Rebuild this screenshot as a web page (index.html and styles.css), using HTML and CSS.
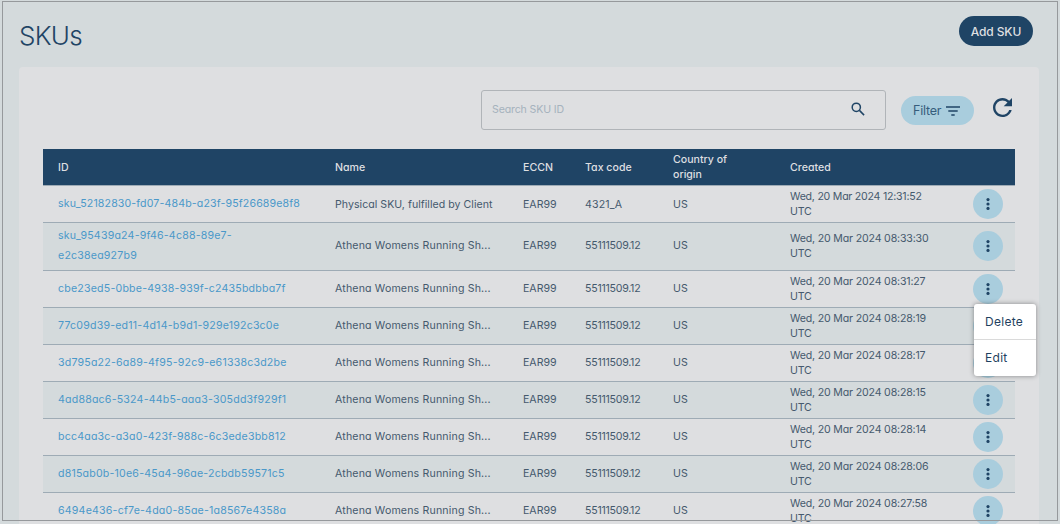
FILE: index.html
```html
<!DOCTYPE html>
<html lang="en">
<head>
<meta charset="utf-8">
<title>SKUs</title>
<link rel="stylesheet" href="styles.css">
</head>
<body>
<svg class="defs" width="0" height="0"><symbol id="dots" viewBox="0 0 4 14"><circle cx="2" cy="2.6" r="1.6"/><circle cx="2" cy="7" r="1.6"/><circle cx="2" cy="11.4" r="1.6"/></symbol></svg>
<main class="page">
  <header class="top">
    <h1 class="title">SKUs</h1>
    <button class="add">Add SKU</button>
  </header>
  <section class="card">
    <div class="toolbar">
      <div class="search">
        <span class="placeholder">Search SKU ID</span>
        <svg class="glass" viewBox="0 0 14 14"><circle cx="5.3" cy="5.3" r="4.1"/><path d="M8.4 8.4l4.7 4.7"/></svg>
      </div>
      <button class="filter"><span>Filter</span><svg class="lines" viewBox="0 0 14 10"><path d="M0 1h14M2.3 5h9.4M5.3 9h3.4"/></svg></button>
      <svg class="refresh" viewBox="4 4 16 16"><path d="M17.65 6.35C16.2 4.9 14.21 4 12 4c-4.42 0-7.99 3.58-7.99 8s3.57 8 7.99 8c3.73 0 6.84-2.55 7.73-6h-2.08c-.82 2.33-3.04 4-5.65 4-3.31 0-6-2.69-6-6s2.69-6 6-6c1.66 0 3.14.69 4.22 1.78L13 11h7V4l-2.35 2.35z"/></svg>
    </div>
    <div class="table">
      <div class="row head"><span>ID</span><span>Name</span><span>ECCN</span><span>Tax code</span><span class="country">Country of origin</span><span>Created</span></div>
      <div class="row first"><a class="id">sku_52182830-fd07-484b-a23f-95f26689e8f8</a><span class="name">Physical SKU, fulfilled by Client</span><span class="eccn">EAR99</span><span class="tax">4321_A</span><span>US</span><span class="date">Wed, 20 Mar 2024 12:31:52 UTC</span><i class="more"><svg><use href="#dots"/></svg></i></div>
      <div class="row tall"><a class="id">sku_95439a24-9f46-4c88-89e7-<br>e2c38ea927b9</a><span class="name">Athena Womens Running Sh...</span><span class="eccn">EAR99</span><span class="tax">55111509.12</span><span>US</span><span class="date">Wed, 20 Mar 2024 08:33:30 UTC</span><i class="more"><svg><use href="#dots"/></svg></i></div>
      <div class="row"><a class="id">cbe23ed5-0bbe-4938-939f-c2435bdbba7f</a><span class="name">Athena Womens Running Sh...</span><span class="eccn">EAR99</span><span class="tax">55111509.12</span><span>US</span><span class="date">Wed, 20 Mar 2024 08:31:27 UTC</span><i class="more"><svg><use href="#dots"/></svg>
        <div class="menu"><span>Delete</span><span>Edit</span></div></i></div>
      <div class="row"><a class="id">77c09d39-ed11-4d14-b9d1-929e192c3c0e</a><span class="name">Athena Womens Running Sh...</span><span class="eccn">EAR99</span><span class="tax">55111509.12</span><span>US</span><span class="date">Wed, 20 Mar 2024 08:28:19 UTC</span><i class="more"><svg><use href="#dots"/></svg></i></div>
      <div class="row"><a class="id">3d795a22-6a89-4f95-92c9-e61338c3d2be</a><span class="name">Athena Womens Running Sh...</span><span class="eccn">EAR99</span><span class="tax">55111509.12</span><span>US</span><span class="date">Wed, 20 Mar 2024 08:28:17 UTC</span><i class="more"><svg><use href="#dots"/></svg></i></div>
      <div class="row"><a class="id">4ad88ac6-5324-44b5-aaa3-305dd3f929f1</a><span class="name">Athena Womens Running Sh...</span><span class="eccn">EAR99</span><span class="tax">55111509.12</span><span>US</span><span class="date">Wed, 20 Mar 2024 08:28:15 UTC</span><i class="more"><svg><use href="#dots"/></svg></i></div>
      <div class="row"><a class="id">bcc4aa3c-a3a0-423f-988c-6c3ede3bb812</a><span class="name">Athena Womens Running Sh...</span><span class="eccn">EAR99</span><span class="tax">55111509.12</span><span>US</span><span class="date">Wed, 20 Mar 2024 08:28:14 UTC</span><i class="more"><svg><use href="#dots"/></svg></i></div>
      <div class="row"><a class="id">d815ab0b-10e6-45a4-96ae-2cbdb59571c5</a><span class="name">Athena Womens Running Sh...</span><span class="eccn">EAR99</span><span class="tax">55111509.12</span><span>US</span><span class="date">Wed, 20 Mar 2024 08:28:06 UTC</span><i class="more"><svg><use href="#dots"/></svg></i></div>
      <div class="row"><a class="id">6494e436-cf7e-4da0-85ae-1a8567e4358a</a><span class="name">Athena Womens Running Sh...</span><span class="eccn">EAR99</span><span class="tax">55111509.12</span><span>US</span><span class="date">Wed, 20 Mar 2024 08:27:58 UTC</span><i class="more"><svg><use href="#dots"/></svg></i></div>
    </div>
  </section>
  <div class="frame"></div>
</main>
</body>
</html>
```
FILE: styles.css
```css
* { box-sizing: border-box; }
body { margin: 0; font-family: Inter, "Open Sans", sans-serif; font-feature-settings: "cv11"; font-size: 10.6px; line-height: 15px; color: #45596d; overflow: hidden; }
button { border: 0; padding: 0; font: inherit; font-feature-settings: inherit; }
.defs { position: absolute; }
.page { position: relative; height: 524px; overflow: hidden; background: #d4dadc; }
.top { height: 67px; padding: 16px 27px 0 19px; display: flex; justify-content: space-between; align-items: flex-start; }
.title { margin: 4px 0 0; font-size: 26px; line-height: 32px; font-weight: 350; letter-spacing: -0.7px; color: #1f4465; }
.add { width: 74px; height: 30px; border-radius: 15px; background: #1f4465; color: #dedfe1; font-size: 12px; font-weight: 500; letter-spacing: -0.1px; }
.card { height: 470px; margin: 0 21px 0 19px; padding: 23px 24px 0; border-radius: 4px; background: #dedfe1; }
.toolbar { display: flex; justify-content: flex-end; height: 40px; margin-bottom: 19px; }
.search { width: 405px; border: 1px solid #b0b4b8; border-radius: 3px; display: flex; align-items: center; justify-content: space-between; padding: 0 20px 2px 10px; color: #a5b2bd; }
.placeholder { letter-spacing: -0.15px; }
.glass { width: 14px; height: 14px; fill: none; stroke: #1f4465; stroke-width: 1.5; }
.filter { display: flex; align-items: center; gap: 5px; padding-left: 12px; width: 73px; height: 29px; margin: 6px 19px 0 15px; border-radius: 15px; background: #a9cddd; color: #365d7c; font-size: 12.5px; letter-spacing: -0.2px; }
.lines { width: 14px; height: 10px; fill: none; stroke: #1f4465; stroke-width: 1.4; }
.refresh { width: 19px; height: 19px; margin: 8px 3px 0 0; fill: #1f4465; }
.row { display: grid; grid-template-columns: 277px 188px 62px 88px 117px 183px 30px; align-items: center; height: 37px; padding-left: 15px; border-bottom: 1px solid #9eabb5; }
.row:nth-child(odd) { background: #d4dadc; }
.row.head { background: #1f4465; color: #dedfe1; font-weight: 500; }
.country { width: 70px; }
.row > span, .row > a { padding-bottom: 1px; }
.row.head > span, .row.first > span { padding-bottom: 0; }
.tall { height: 48px; padding-bottom: 1px; }
.id { color: #4a98c9; line-height: 20px; letter-spacing: 0.2px; }
.first .id { letter-spacing: 0.14px; }
.name { letter-spacing: 0.16px; }
.first .name { letter-spacing: 0.03px; }
.tax { letter-spacing: -0.25px; }
.first .tax { letter-spacing: 0.15px; }
.row > .date { width: 145px; padding-bottom: 0; letter-spacing: -0.17px; }
.first .date { letter-spacing: -0.24px; }
.more { position: relative; display: flex; align-items: center; justify-content: center; width: 30px; height: 30px; border-radius: 50%; background: #a9cddd; font-style: normal; }
.more svg { width: 4px; height: 14px; fill: #1f4465; }
.menu { position: absolute; z-index: 2; left: 1px; top: 30px; width: 62px; height: 72px; border-radius: 3px; background: #fff; box-shadow: 0 0 5px rgba(0,0,0,.4); font-size: 12px; letter-spacing: 0.3px; color: #1f3f60; }
.menu span { display: flex; align-items: center; height: 36px; padding-left: 11px; }
.menu span:first-child { border-bottom: 1px solid #dadada; }
.menu span:last-child { height: 35px; }
.frame { position: absolute; left: 2px; top: 1px; width: 1056px; height: 520px; border: 1px solid #96999c; }
```
